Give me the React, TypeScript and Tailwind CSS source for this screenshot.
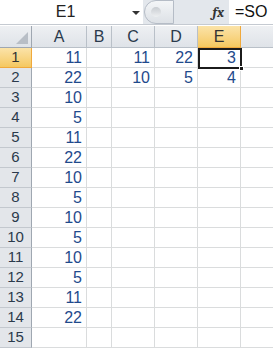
import React from "react";

const cols = ["A", "B", "C", "D", "E"];
const colA = [11, 22, 10, 5, 11, 22, 10, 5, 10, 5, 10, 5, 11, 22, null];
const extra: Record<number, { C?: number; D?: number; E?: number }> = {
  1: { C: 11, D: 22, E: 3 },
  2: { C: 10, D: 5, E: 4 },
};

const font = { fontFamily: '"Liberation Sans", Arial, sans-serif' };

function FormulaBar() {
  return (
    <div className="flex h-[25px] border-b border-[#c5cad1] bg-[#e3e7ec]">
      <div className="relative flex w-[143px] items-center justify-center bg-white text-[16px] text-[#222]">
        <span className="-ml-3">E1</span>
        <span className="absolute right-[3px] top-[11px] h-0 w-0 border-x-[4px] border-t-[4px] border-x-transparent border-t-[#333]" />
      </div>
      <div className="relative flex flex-1 items-center">
        <div className="absolute left-[1px] top-0 h-[24px] w-[30px] rounded-l-full border border-[#b5bcc6] bg-gradient-to-b from-[#f3f5f7] to-[#dde1e6]">
          <span className="absolute left-[6px] top-[6px] h-[10px] w-[10px] rounded-full bg-gradient-to-b from-[#c8ccd1] to-[#eef0f2]" />
        </div>
        <span className="ml-auto mr-[5px] font-serif text-[14px] font-bold italic text-[#333]">fx</span>
      </div>
      <div className="flex w-[44px] items-center bg-white pl-[6px] text-[16px] text-[#111]">=SO</div>
    </div>
  );
}

export default function App() {
  const rows = Array.from({ length: 15 }, (_, i) => i + 1);
  return (
    <div className="h-[350px] w-[273px] overflow-hidden bg-white" style={font}>
      <FormulaBar />
      <div className="h-[1px] bg-white" />
      <div className="relative">
        <div className="grid grid-cols-[32px_55px_25px_43px_43px_43px_1fr]">
          {/* header row */}
          <div className="relative h-[22px] border-b border-r border-[#9fa7b1] bg-gradient-to-b from-[#eef0f3] to-[#dfe3e8]">
            <span className="absolute bottom-[3px] right-[3px] h-0 w-0 border-b-[12px] border-l-[12px] border-b-[#b8bec6] border-l-transparent" />
          </div>
          {cols.map((c) => (
            <div
              key={c}
              className={
                c === "E"
                  ? "flex h-[22px] items-center justify-center border-b border-r border-[#f0a93c] bg-gradient-to-b from-[#fbe3a8] to-[#f5c85f] text-[16px] text-[#333]"
                  : "flex h-[22px] items-center justify-center border-b border-r border-[#b9c0c8] bg-gradient-to-b from-[#eef0f3] to-[#dfe3e8] text-[16px] text-[#2b3a4c]"
              }
            >
              {c}
            </div>
          ))}
          <div className="h-[22px] border-b border-[#b9c0c8] bg-gradient-to-b from-[#eef0f3] to-[#dfe3e8]" />

          {rows.map((r) => {
            const e = extra[r] || {};
            const vals: (number | null | undefined)[] = [colA[r - 1], null, e.C, e.D, e.E];
            return (
              <React.Fragment key={r}>
                <div
                  className={
                    r === 1
                      ? "flex h-[20px] items-center justify-center border-b border-r border-[#f0a93c] bg-gradient-to-b from-[#fbe3a8] to-[#f5c85f] text-[15px] text-[#333]"
                      : "flex h-[20px] items-center justify-center border-b border-r border-b-[#c3c8ce] border-r-[#9fa7b1] bg-[#e3e6ea] text-[15px] text-[#2b3a4c]"
                  }
                >
                  {r}
                </div>
                {vals.map((v, i) => (
                  <div
                    key={i}
                    className="flex h-[20px] items-center justify-end border-b border-r border-[#dadcdd] pr-[4px] text-[16px] text-[#1f4a8c]"
                  >
                    {v ?? ""}
                  </div>
                ))}
                <div className="h-[20px] border-b border-[#dadcdd]" />
              </React.Fragment>
            );
          })}
        </div>
        {/* active cell E1 */}
        <div className="pointer-events-none absolute left-[198px] top-[22px] h-[21px] w-[44px] border-2 border-[#1b1b1b]">
          <span className="absolute -bottom-[4px] -right-[4px] h-[5px] w-[5px] border border-white bg-[#1b1b1b]" />
        </div>
      </div>
    </div>
  );
}
